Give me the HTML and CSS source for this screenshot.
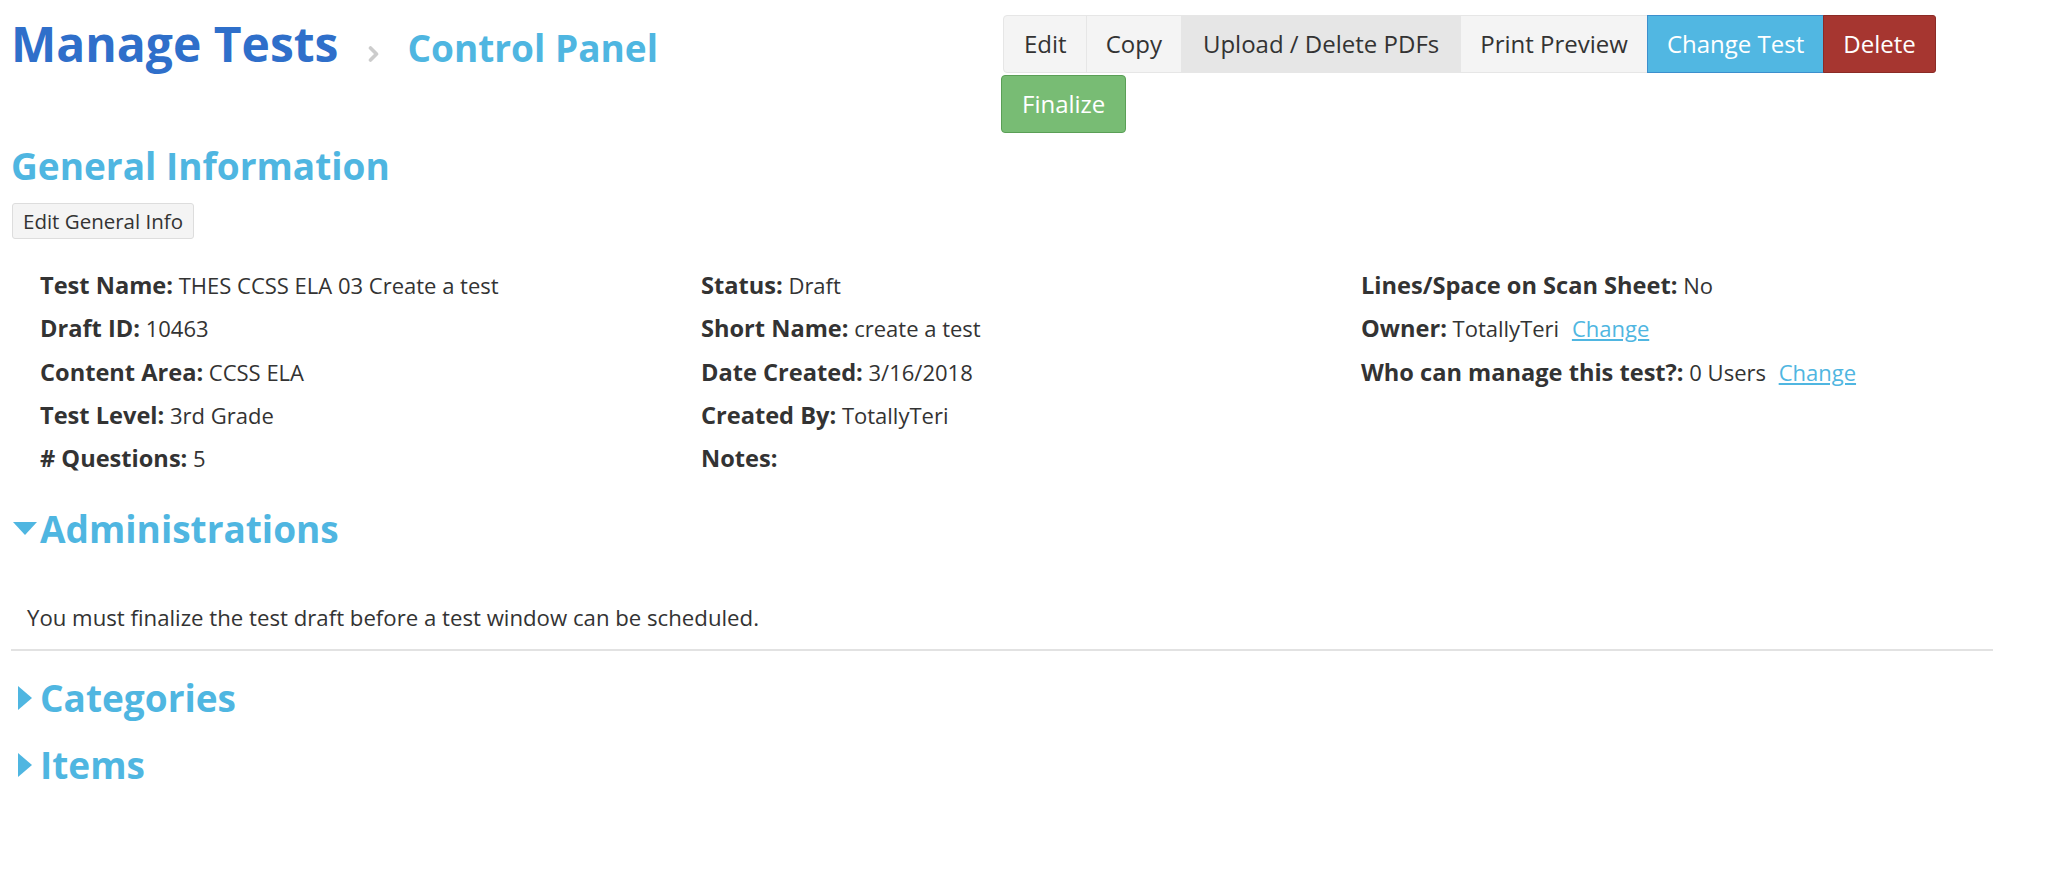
FILE: index.html
```html
<!DOCTYPE html>
<html lang="en">
<head>
<meta charset="utf-8">
<title>Manage Tests - Control Panel</title>
<link rel="stylesheet" href="styles.css">
</head>
<body>
<div class="page">
  <header class="header">
    <div class="title-block">
      <h1 class="title">Manage Tests</h1>
      <svg class="crumb-sep" width="11" height="16" viewBox="0 0 11 16" aria-hidden="true"><polyline points="2.5,2 8.5,8 2.5,14" fill="none" stroke="#cccccc" stroke-width="3.6" stroke-linecap="round" stroke-linejoin="round"/></svg>
      <h2 class="subtitle">Control Panel</h2>
    </div>
    <div class="actions">
      <div class="btn-group">
        <button class="btn btn-default first">Edit</button>
        <button class="btn btn-default">Copy</button>
        <button class="btn btn-default active">Upload / Delete PDFs</button>
        <button class="btn btn-default">Print Preview</button>
        <button class="btn btn-info">Change Test</button>
        <button class="btn btn-danger last">Delete</button>
      </div>
      <button class="btn btn-success solo">Finalize</button>
    </div>
  </header>

  <h3 class="section-title">General Information</h3>
  <button class="btn-sm">Edit General Info</button>

  <div class="info-grid">
    <div class="info-col">
      <div class="info-row"><b>Test Name:</b> THES CCSS ELA 03 Create a test</div>
      <div class="info-row"><b>Draft ID:</b> 10463</div>
      <div class="info-row"><b>Content Area:</b> CCSS ELA</div>
      <div class="info-row"><b>Test Level:</b> 3rd Grade</div>
      <div class="info-row"><b># Questions:</b> 5</div>
    </div>
    <div class="info-col">
      <div class="info-row"><b>Status:</b> Draft</div>
      <div class="info-row"><b>Short Name:</b> create a test</div>
      <div class="info-row"><b>Date Created:</b> 3/16/2018</div>
      <div class="info-row"><b>Created By:</b> TotallyTeri</div>
      <div class="info-row"><b>Notes:</b></div>
    </div>
    <div class="info-col">
      <div class="info-row"><b>Lines/Space on Scan Sheet:</b> No</div>
      <div class="info-row"><b>Owner:</b> TotallyTeri <a class="link" href="#">Change</a></div>
      <div class="info-row"><b>Who can manage this test?:</b> 0 Users <a class="link" href="#">Change</a></div>
    </div>
  </div>

  <h3 class="section-title toggle">
    <span class="caret-box"><svg class="caret-down" width="24" height="13" viewBox="0 0 24 13" aria-hidden="true"><polygon points="0,0 24,0 12,13" fill="#4fb6e1"/></svg></span>Administrations
  </h3>
  <p class="message">You must finalize the test draft before a test window can be scheduled.</p>
  <hr class="divider">

  <h3 class="section-title toggle collapsed">
    <span class="caret-box"><svg class="caret-right" width="14" height="24" viewBox="0 0 14 24" aria-hidden="true"><polygon points="0,0 14,12 0,24" fill="#4fb6e1"/></svg></span>Categories
  </h3>
  <h3 class="section-title toggle collapsed items">
    <span class="caret-box"><svg class="caret-right" width="14" height="24" viewBox="0 0 14 24" aria-hidden="true"><polygon points="0,0 14,12 0,24" fill="#4fb6e1"/></svg></span>Items
  </h3>
</div>
</body>
</html>
```

FILE: styles.css
```css
html, body {
  margin: 0;
  padding: 0;
  background: #ffffff;
}

body {
  font-family: "Open Sans", "Liberation Sans", sans-serif;
  color: #333333;
  font-size: 22px;
}

.page {
  width: 1993px;
  padding-left: 11px;
  box-sizing: border-box;
}

/* Header */
.header {
  display: grid;
  grid-template-columns: 992px auto;
  padding-top: 15px;
}

.title-block {
  display: flex;
  align-items: baseline;
  padding-top: 2px;
}

.title {
  margin: 0;
  font-size: 48px;
  line-height: 53px;
  font-weight: 700;
  color: #2f6fca;
}

.crumb-sep {
  margin: 0 28px 7px 30px;
  flex: none;
}

.subtitle {
  margin: 0;
  font-size: 37px;
  line-height: 53px;
  font-weight: 700;
  color: #4fb6e1;
}

.actions {
  display: flex;
  flex-direction: column;
  align-items: flex-start;
  gap: 2px;
}

.btn-group {
  display: flex;
}

.btn {
  font-family: "Open Sans", "Liberation Sans", sans-serif;
  font-size: 24px;
  line-height: 34px;
  padding: 11px 19px;
  border: 1px solid #e6e6e6;
  margin: 0;
  cursor: pointer;
  border-radius: 0;
  white-space: nowrap;
}

.btn-group .btn + .btn {
  margin-left: -1px;
}

.btn-default {
  background: #f4f4f4;
  color: #333333;
  border-color: #e6e6e6;
}

.btn-default.active {
  background: #e6e6e6;
  border-color: #e6e6e6;
  padding-left: 21px;
  padding-right: 21px;
}

.btn-info {
  background: #51b7e2;
  color: #ffffff;
  border-color: #3c8fcd;
}

.btn-danger {
  background: #a63630;
  color: #ffffff;
  border-color: #8b2b26;
}

.btn.first {
  border-radius: 4px 0 0 4px;
  padding-left: 20px;
}

.btn.last {
  border-radius: 0 3px 3px 0;
}

.btn-success {
  background: #78bc74;
  color: #ffffff;
  border-color: #5a9f56;
}

.btn.solo {
  border-radius: 4px;
  margin-left: -2px;
  padding-left: 20px;
  padding-right: 20px;
}

/* Sections */
.section-title {
  margin: 13px 0 0;
  font-size: 37px;
  line-height: 40px;
  font-weight: 700;
  color: #4fb6e1;
}

.btn-sm {
  display: block;
  margin: 17px 0 0 1px;
  font-family: "Open Sans", "Liberation Sans", sans-serif;
  font-size: 20.5px;
  line-height: 28px;
  padding: 3px 10px;
  color: #333333;
  background: #f4f4f4;
  border: 1px solid #dddddd;
  border-radius: 3px;
}

.info-grid {
  display: grid;
  grid-template-columns: 661px 660px 600px;
  margin: 25px 0 0 29px;
}

.info-row {
  line-height: 43.33px;
  white-space: nowrap;
}

.info-row b {
  font-weight: 700;
  font-size: 23.6px;
}

.link {
  color: #4fb6e1;
  text-decoration: underline;
  margin-left: 7px;
}

.toggle {
  display: flex;
  align-items: center;
}

.section-title.toggle {
  margin-top: 28px;
}

.caret-box {
  width: 29px;
  flex: none;
  display: flex;
  align-items: center;
}

.caret-down {
  margin-left: 2px;
}

.caret-right {
  margin-left: 7px;
}

.message {
  margin: 54px 0 0 16px;
  font-size: 22.2px;
  line-height: 30px;
}

.divider {
  margin: 16px 0 0;
  border: 0;
  border-top: 2px solid #e2e2e2;
  height: 0;
}

.section-title.collapsed {
  margin-top: 27px;
}

.section-title.collapsed.items {
  margin-top: 27px;
}
```
